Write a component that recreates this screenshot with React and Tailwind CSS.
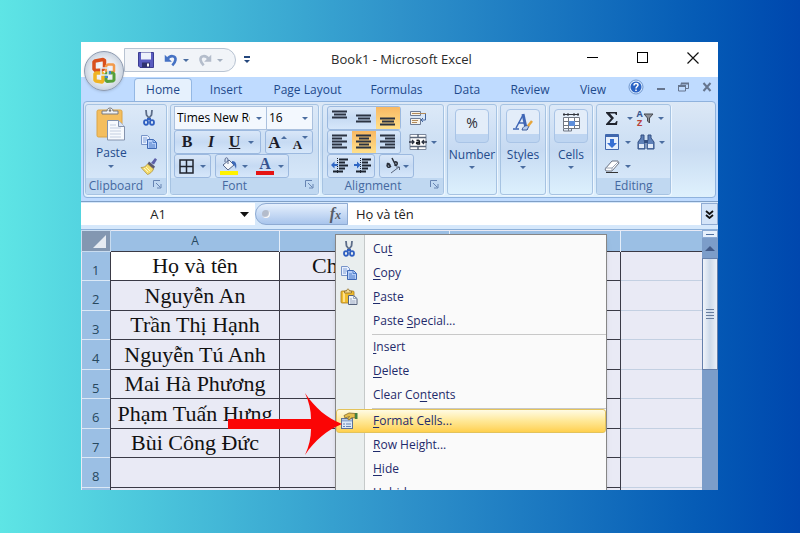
import clsx from 'clsx';

const tabs = [
  { name: 'Home', width: 'w-[58px]' },
  { name: 'Insert', width: 'w-[68px]' },
  { name: 'Page Layout', width: 'w-[95px]' },
  { name: 'Formulas', width: 'w-[83px]' },
  { name: 'Data', width: 'w-[58px]' },
  { name: 'Review', width: 'w-[68px]' },
  { name: 'View', width: 'w-[58px]' },
];

const names = ['Họ và tên', 'Nguyễn An', 'Trần Thị Hạnh', 'Nguyễn Tú Anh', 'Mai Hà Phương', 'Phạm Tuấn Hưng', 'Bùi Công Đức', '', ''];

const menuItems = [
  { before: 'Cu', key: 't', after: '', icon: 'cut' },
  { before: '', key: 'C', after: 'opy', icon: 'copy' },
  { before: '', key: 'P', after: 'aste', icon: 'paste' },
  { before: 'Paste ', key: 'S', after: 'pecial...' },
  { before: '', key: 'I', after: 'nsert', line: true },
  { before: '', key: 'D', after: 'elete' },
  { before: 'Clear Co', key: 'n', after: 'tents' },
  { before: '', key: 'F', after: 'ormat Cells...', icon: 'format', line: true, active: true },
  { before: '', key: 'R', after: 'ow Height...' },
  { before: '', key: 'H', after: 'ide' },
  { before: '', key: 'U', after: 'nhide' },
];

function Svg({ size = 18, children, className, box = '0 0 18 18' }) {
  return (
    <svg width={size} height={size} viewBox={box} fill="none" className={clsx('shrink-0', className)} aria-hidden="true">
      {children}
    </svg>
  );
}

function Caret({ className = 'text-[#4a6da0]' }) {
  return (
    <svg width="6" height="3" viewBox="0 0 6 3" className={clsx('shrink-0', className)} aria-hidden="true">
      <path d="M0 0h6L3 3z" fill="currentColor" />
    </svg>
  );
}

function CutIcon() {
  return (
    <Svg>
      <path d="M6 1l.5 5 4 5M12 1l-.5 5-4 5" stroke="#5c6c88" strokeWidth="1.800" />
      <ellipse cx="6" cy="13.500" rx="2" ry="2.300" stroke="#2f5fc0" strokeWidth="1.800" />
      <ellipse cx="12" cy="13.500" rx="2" ry="2.300" stroke="#2f5fc0" strokeWidth="1.800" />
      <path d="M7 9h4v2H7z" fill="#2f5fc0" />
    </Svg>
  );
}

function CopyIcon() {
  return (
    <Svg>
      <path d="M1.500 2.500h6l2 2v7h-8z" fill="#e8f0fd" stroke="#7794c8" />
      <path d="M3 5h4M3 7h4M3 9h3" stroke="#7fa0da" />
      <path d="M7.500 6.500h6l3 3v6h-9z" fill="#b5cef8" stroke="#3e68b4" />
      <path d="M13 6.500v3h3.500M9 10h3M9 12h6M9 14h6" stroke="#4f7fcb" />
    </Svg>
  );
}

function PasteIcon() {
  return (
    <Svg>
      <rect x="1" y="3" width="13" height="12" rx="1" fill="#f0bd2e" stroke="#a87a1c" strokeWidth=".8" />
      <path d="M3 4h2v10H3z" fill="#ffe08a" />
      <path d="M4.500 5V3h2c0-2.500 3-2.500 3 0h2v2z" fill="#f3d990" stroke="#8d6b23" strokeWidth=".8" />
      <path d="M8.500 7.500h5l3.500 3v6h-8.500z" fill="#eef2f8" stroke="#56637d" />
      <path d="M13.500 7.500v3H17M10 11h2M10 13h5.500M10 15h5.500" stroke="#8495b2" strokeWidth=".8" />
    </Svg>
  );
}

function BigPasteIcon() {
  return (
    <svg width="30" height="34" viewBox="0 0 30 34" fill="none" aria-hidden="true">
      <rect x="1" y="3" width="25" height="27" rx="1.500" fill="#f4be5e" stroke="#dba446" />
      <path d="M6 7V4h5c0-4 6-4 6 0h5v3z" fill="#eef0f2" stroke="#787b80" />
      <circle cx="14" cy="3.500" r="1.200" fill="#777" />
      <path d="M11.500 13.500h11l6 6V33h-17z" fill="#f7fafe" stroke="#8493ad" />
      <path d="M22.500 13.500v6h6" fill="#dbe5f4" stroke="#8493ad" />
      <path d="M14 18h6M14 21h11M14 24h11M14 27h11M14 30h11" stroke="#c3cee0" />
    </svg>
  );
}

function BrushIcon() {
  return (
    <Svg>
      <path d="M11 6l4-5 2 1.500-3 5z" fill="#5b5fa8" />
      <path d="M9 4.500l6 5-1.500 2.500-6-5z" fill="#5d5a70" />
      <path d="M7.500 7l6 5c-1 3-4 5-6 5.500L1 10.500c3 0 5-1 6.500-3.500z" fill="#f4dc6c" stroke="#a88a35" strokeWidth=".7" />
      <path d="M4 11l4 4M6 10l4 4" stroke="#fff6bf" />
    </Svg>
  );
}

function FormatIcon() {
  return (
    <Svg>
      <rect x="1.500" y="6.500" width="11" height="10" fill="#dfe9f8" stroke="#5c7299" />
      <path d="M2 8.500h10" stroke="#93add8" strokeWidth="2" />
      <path d="M3 12h2M6 12h5M3 14.500h2M6 14.500h5" stroke="#6583b5" />
      <path d="M4 3.500l5-2.500 6 .5v4.500l-3-.500-3 2.500-1.500-1 2-2.500L5 6z" fill="#e6bf4d" stroke="#82682d" strokeWidth=".8" />
      <path d="M15 1h2.500v6H15z" fill="#43803f" />
    </Svg>
  );
}

const menuIcons = { cut: <CutIcon />, copy: <CopyIcon />, paste: <PasteIcon />, format: <FormatIcon /> };

function OfficeLogo() {
  return (
    <svg width="28" height="28" viewBox="0 0 28 28" fill="none" aria-hidden="true">
      <path d="M5 4l8-1.500 1.500 1v8L12 13l-6.500.5L4 12V5z" stroke="#d9501c" strokeWidth="3.500" strokeLinejoin="round" />
      <path d="M18 7.500h5l1 1V14l-1 1h-6l-1-1V9z" stroke="#f39a4a" strokeWidth="2.500" strokeLinejoin="round" />
      <path d="M6 16h5.500l1.500 1v6.500L12 25l-6-1-1-1v-6z" stroke="#f0b323" strokeWidth="3.500" strokeLinejoin="round" />
      <path d="M17 16h6l1 1v6l-1 1-6 .5-1-1V17z" stroke="#57a03a" strokeWidth="3" strokeLinejoin="round" />
      <path d="M15 20h3M20 17v-3" stroke="#3f86cf" strokeWidth="2" />
      <path d="M11 11h7v7h-7z" stroke="#dcebf9" strokeWidth="1.500" />
    </svg>
  );
}

function Lines({ rows }) {
  return (
    <Svg>
      {rows.map(([x, y, w]) => (
        <path key={y} d={`M${x} ${y + 0.5}h${w}`} stroke="#2b3342" strokeWidth="1.800" />
      ))}
    </Svg>
  );
}

function IndentIcon({ flip }) {
  return (
    <Svg>
      <path d="M8 2.500h9M8 5.500h6M8 8.500h9M8 11.500h6M2 14.500h10" stroke="#1d2430" strokeWidth="2" />
      <path d="M6.500 1v16" stroke="#1d2430" strokeDasharray="1 1" />
      <path d={flip ? 'M0 7h3V4.500L6.500 8 3 11.500V9H0z' : 'M6.500 7h-3V4.500L0 8l3.500 3.500V9h3z'} fill="#2e66c4" />
    </Svg>
  );
}

function Tool({ label, children, className }) {
  return (
    <button type="button" aria-label={label} className={clsx('flex items-center justify-center', className)}>
      {children}
    </button>
  );
}

function ToolBox({ children, className }) {
  return (
    <div className={clsx('flex h-6 items-stretch rounded-[3px] border border-[#9cb9df] bg-linear-to-b from-[#d9e7f8] via-[#c6daf3] to-[#d6e7fa]', className)}>
      {children}
    </div>
  );
}

function Group({ title, launcher, className, children }) {
  return (
    <section className={clsx('flex flex-col overflow-hidden rounded-[3px] border border-[#a6c3e2] bg-linear-to-b from-[#dce9f8] via-[#cbdef3] to-[#dbebfb] shadow-[1px_1px_0_#edf6ff]', className)}>
      <div className="grow">{children}</div>
      <footer className="relative flex h-4 items-center justify-center bg-[#c0d8f1] text-[12px] text-[#4468a0]">
        <span className={launcher ? 'pr-5' : ''}>{title}</span>
        {launcher && (
          <button type="button" aria-label={`${title} settings`} className="absolute top-0.5 right-1">
            <Svg size={9} box="0 0 9 9">
              <path d="M.5 7V.5H7M3 3l4.500 4.500M8 4v4H4" stroke="#6684b2" />
            </Svg>
          </button>
        )}
      </footer>
    </section>
  );
}

function SmallGroup({ title, className, children }) {
  return (
    <button type="button" className={clsx('flex flex-col items-center rounded-[3px] border border-[#a6c3e2] bg-linear-to-b from-[#dce9f8] via-[#c6daf2] to-[#dcf0fd] pt-1 text-[12px] text-[#244b8c] shadow-[1px_1px_0_#edf6ff]', className)}>
      <span className="flex h-[34px] w-[34px] justify-center rounded border border-[#a9c4e6] bg-linear-to-b from-[#e3edf9] from-75% to-[#bed5f1] to-75% pt-0.5">
        {children}
      </span>
      <span className="mt-[3px] h-[18px] leading-[18px]">{title}</span>
      <Caret className="mt-0.5 text-[#4a6da0]" />
    </button>
  );
}

function TitleBar() {
  return (
    <header className="relative flex h-[35px] bg-white">
      <div className="mt-[6px] ml-[43px] flex h-6 w-[112px] items-center gap-1 rounded-r-full border border-[#b8c3d2] bg-[#f1f4f8] pl-3">
        <button type="button" aria-label="Save">
          <Svg>
            <path d="M1.500 1.500h15v15H3l-1.500-1.500z" fill="#5a5cc0" stroke="#3c3d92" />
            <path d="M4 1.500h10v7H4z" fill="#eef1fb" />
            <path d="M5 11.500h8v5H5z" fill="#30336f" />
            <path d="M10 12.500h2v3h-2z" fill="#fff" />
          </Svg>
        </button>
        <button type="button" aria-label="Undo" className="ml-1 flex items-center gap-1">
          <Svg size={16}>
            <path d="M5 8c3-5 10-4 9 1-.300 2-1.500 4-3.500 6" stroke="#4672c4" strokeWidth="3" />
            <path d="M2 3v8h8z" fill="#4672c4" />
          </Svg>
          <Caret />
        </button>
        <button type="button" aria-label="Redo" className="ml-1 flex items-center gap-1">
          <Svg size={16}>
            <path d="M13 8C10 3 3 4 4 9c.300 2 1.500 4 3.500 6" stroke="#b4bdcb" strokeWidth="3" />
            <path d="M16 3v8H8z" fill="#b4bdcb" />
          </Svg>
          <Caret className="text-[#a4afbf]" />
        </button>
      </div>
      <button type="button" aria-label="Customize toolbar" className="ml-2 flex flex-col items-center justify-center gap-0.5 text-[#24477d]">
        <span className="h-0.5 w-[6px] bg-current" />
        <Caret className="text-[#24477d]" />
      </button>
      <h1 className="absolute inset-0 flex items-center justify-center pl-1 text-[13px] text-[#2b2b2b]">Book1 - Microsoft Excel</h1>
      <div className="relative ml-auto flex items-center gap-[39px] pr-[19px] pb-1">
        <button type="button" aria-label="Minimize" className="h-px w-[11px] bg-black" />
        <button type="button" aria-label="Maximize" className="size-[11px] border border-black" />
        <button type="button" aria-label="Close">
          <Svg size={12} box="0 0 12 12">
            <path d="M.500.500l11 11M11.500.500l-11 11" stroke="#111" strokeWidth="1.200" />
          </Svg>
        </button>
      </div>
      <button type="button" aria-label="Office menu" className="absolute top-[9px] left-[3px] z-10 flex size-10 items-center justify-center rounded-full border border-[#8e9bb0] bg-radial from-white via-[#e3e8ef] to-[#aab8cb] shadow">
        <OfficeLogo />
      </button>
    </header>
  );
}

function TabBar() {
  return (
    <nav className="flex h-6 items-end bg-[#bfdbff] pl-[53px] text-[12px] text-[#1e4a8c]">
      {tabs.map((tab, i) => (
        <button key={tab.name} type="button" className={clsx('h-[23px] shrink-0 text-center', tab.width, i === 0 && 'rounded-t border border-b-0 border-[#94b8e4] bg-[#e6f1fd]')}>
          {tab.name}
        </button>
      ))}
      <div className="ml-auto flex h-full items-center gap-[13px] pr-1.5 pb-1">
        <button type="button" aria-label="Help">
          <Svg size={16} box="0 0 16 16">
            <circle cx="8" cy="8" r="7" fill="#dcecff" stroke="#6e96cf" />
            <circle cx="8" cy="8" r="5.500" fill="#2b63c4" />
            <path d="M6 6.500c0-3 4-2.500 4-.5C10 7.500 8 7.500 8 9.500M8 10.500v1.500" stroke="#fff" strokeWidth="1.500" />
          </Svg>
        </button>
        <button type="button" aria-label="Minimize book" className="mt-1 h-0.5 w-2 bg-[#66758e]" />
        <button type="button" aria-label="Restore book">
          <Svg size={11} box="0 0 11 11">
            <path d="M3 3V1.500h7.500v5H8M.5 4h7v5h-7z" stroke="#66758e" />
            <path d="M0 4h8M3 1.500h8" stroke="#66758e" strokeWidth="2" />
          </Svg>
        </button>
        <button type="button" aria-label="Close book">
          <Svg size={10} box="0 0 10 10">
            <path d="M1.500 1l7 8M8.500 1l-7 8" stroke="#66758e" strokeWidth="2" />
          </Svg>
        </button>
      </div>
    </nav>
  );
}

function FontSelect({ label, value, className }) {
  return (
    <div className={clsx('relative flex items-center border border-[#abc1de] bg-[#f3f8fe]', className)}>
      <select aria-label={label} className="h-full w-full appearance-none overflow-hidden pr-4 pl-0.5 text-[12px] text-clip text-black">
        <option>{value}</option>
      </select>
      <Caret className="pointer-events-none absolute right-1 text-[#4a6da0]" />
    </div>
  );
}

function Ribbon() {
  return (
    <div className="border-b border-[#7f9fc6] bg-[#bfdbff] px-0.5 pb-[3px]">
      <div className="flex h-[97px] items-stretch gap-[3px] rounded border border-[#8fb2dd] bg-linear-to-b from-[#dce8f6] via-[#c9dcf2] to-[#dff1fd] px-px py-0.5">
        <Group title="Clipboard" launcher className="w-[82px]">
          <div className="flex h-full justify-between pt-0.5 pr-2 pl-2.5">
            <button type="button" className="flex flex-col items-center text-[12px] text-[#244b8c]">
              <BigPasteIcon />
              <span className="mt-1 h-4 leading-4">Paste</span>
              <Caret className="mt-1 text-[#4a6da0]" />
            </button>
            <div className="flex flex-col gap-1.5 pt-0.5">
              <button type="button" aria-label="Cut"><CutIcon /></button>
              <button type="button" aria-label="Copy"><CopyIcon /></button>
              <button type="button" aria-label="Format painter"><BrushIcon /></button>
            </div>
          </div>
        </Group>

        <Group title="Font" launcher className="w-[149px]">
          <div className="flex flex-col px-[3px] pt-px">
            <div className="flex h-6">
              <FontSelect label="Font" value="Times New Roman" className="w-[93px]" />
              <FontSelect label="Font size" value="16" className="w-[46px] border-l-0" />
            </div>
            <div className="flex gap-1 font-['Liberation_Serif'] text-[16px] leading-none font-bold text-[#1c1c28]">
              <ToolBox className="w-[87px]">
                <Tool label="Bold" className="w-6">B</Tool>
                <Tool label="Italic" className="w-6 italic">I</Tool>
                <Tool label="Underline" className="grow gap-2"><span className="underline">U</span><Caret /></Tool>
              </ToolBox>
              <ToolBox className="w-[48px]">
                <Tool label="Grow font" className="w-6 items-end pb-0.5 text-[17px]">A<Caret className="mb-3 rotate-180 text-[#4a6da0]" /></Tool>
                <Tool label="Shrink font" className="w-6 items-end pb-0.5 text-[13px]">A<Caret className="mb-3 text-[#4a6da0]" /></Tool>
              </ToolBox>
            </div>
            <div className="flex gap-1">
              <ToolBox className="w-[37px]">
                <Tool label="Borders" className="grow gap-1.5">
                  <Svg size={15} box="0 0 15 15"><path d="M1 1h13v13H1zM7.500 1v13M1 7.500h13" stroke="#20242e" strokeWidth="1.500" /></Svg>
                  <Caret />
                </Tool>
              </ToolBox>
              <ToolBox className="w-[74px]">
                <Tool label="Fill color" className="w-9 gap-1">
                  <Svg>
                    <path d="M3 8l6-5 5 5-6 5z" fill="#f4f7fb" stroke="#56678b" />
                    <path d="M8 7V3c0-3-3-3-3 0v2" stroke="#56678b" />
                    <path d="M12 4c4 0 5 3 4 8-1-3-2-5-4-5z" fill="#3d69b8" />
                    <path d="M0 14h18v4H0z" fill="#fff200" />
                  </Svg>
                  <Caret />
                </Tool>
                <Tool label="Font color" className="w-9 gap-1 font-['Liberation_Serif'] font-bold text-[#36538f]">
                  <span className="flex h-[18px] w-[18px] items-start justify-center border-b-4 border-[#e51414] text-[16px] leading-[14px]">A</span>
                  <Caret />
                </Tool>
              </ToolBox>
            </div>
          </div>
        </Group>

        <Group title="Alignment" launcher className="w-[122px]">
          <div className="flex flex-col px-1 pt-px">
            <div className="flex gap-2">
              <ToolBox className="w-[74px]">
                <Tool label="Top align" className="flex-1"><Lines rows={[[1, 2, 15], [3, 5, 12], [1, 8, 15]]} /></Tool>
                <Tool label="Middle align" className="flex-1"><Lines rows={[[1, 6, 15], [3, 9, 12], [1, 12, 15]]} /></Tool>
                <Tool label="Bottom align" className="flex-1 bg-linear-to-b from-[#f8b863] to-[#ffe08a]"><Lines rows={[[1, 9, 15], [3, 12, 12], [1, 15, 15]]} /></Tool>
              </ToolBox>
              <Tool label="Wrap text" className="h-6">
                <Svg>
                  <path d="M1.500 2.500h10v4h-10zM1.500 9.500h10v6h-10z" fill="#f7f2e8" stroke="#6d7c96" />
                  <path d="M3 4.500h14M3 11.500h6M3 13.500h5" stroke="#b18a59" />
                  <path d="M16.500 5v6h-4M14 9l-2 2 2 2" stroke="#43659d" />
                </Svg>
              </Tool>
            </div>
            <div className="flex gap-2">
              <ToolBox className="w-[74px]">
                <Tool label="Align left" className="flex-1"><Lines rows={[[1, 2, 15], [1, 5, 10], [1, 8, 15], [1, 11, 10], [1, 14, 15]]} /></Tool>
                <Tool label="Center" className="flex-1 bg-linear-to-b from-[#f8b863] to-[#ffe08a]"><Lines rows={[[1, 2, 15], [4, 5, 10], [1, 8, 15], [4, 11, 10], [1, 14, 15]]} /></Tool>
                <Tool label="Align right" className="flex-1"><Lines rows={[[1, 2, 15], [6, 5, 10], [1, 8, 15], [6, 11, 10], [1, 14, 15]]} /></Tool>
              </ToolBox>
              <Tool label="Merge and center" className="h-6 gap-1">
                <Svg>
                  <path d="M1 1.500h16v15H1z" fill="#fff" stroke="#7b879c" />
                  <path d="M1 4.500h16M1 13.500h16M9 1v3.500M9 13.500V17" stroke="#5a6679" strokeWidth="1.500" />
                  <path d="M0 9h5M18 9h-5M3 7l2 2-2 2M15 7l-2 2 2 2" stroke="#2a3140" strokeWidth="1.300" />
                  <path d="M7.500 7.500c3-1 3 0 3 3.500-4 .5-4-2 0-2" stroke="#16191f" strokeWidth="1.400" />
                </Svg>
                <Caret />
              </Tool>
            </div>
            <div className="flex gap-1">
              <ToolBox className="w-[48px]">
                <Tool label="Decrease indent" className="flex-1"><IndentIcon /></Tool>
                <Tool label="Increase indent" className="flex-1"><IndentIcon flip /></Tool>
              </ToolBox>
              <ToolBox className="w-[35px]">
                <Tool label="Orientation" className="grow gap-px text-[#2a2f3a]">
                  <Svg>
                    <path d="M3 6l4 4M3 9c0-3 2-3 3-1 1 3-4 3-2.500 0M8 1l4 8M10 6c1-2 4-1 3 1.500-1 1.500-2 1-2.500 0" stroke="currentColor" strokeWidth="1.500" />
                    <path d="M7 16l8-6M12 10h3.500v3" stroke="#59657b" />
                  </Svg>
                  <Caret />
                </Tool>
              </ToolBox>
            </div>
          </div>
        </Group>

        <SmallGroup title="Number" className="w-[50px]">
          <span className="text-[14px] text-[#2b2b33]">%</span>
        </SmallGroup>
        <SmallGroup title="Styles" className="w-[46px]">
          <Svg size={20} box="0 0 20 20">
            <path d="M0 17h6M9 17h6M3 16L10 3M5 11h6" stroke="#3f66b5" strokeWidth="1.500" />
            <path d="M10 2l3 14" stroke="#3f66b5" strokeWidth="3" />
            <path d="M9 18c1-4 4-5 7-4l-2 4z" fill="#b7cdf0" stroke="#3f5e9c" />
            <path d="M15 14l4-5" stroke="#e6a53b" strokeWidth="2.500" />
          </Svg>
        </SmallGroup>
        <SmallGroup title="Cells" className="w-[44px]">
          <Svg size={20} box="0 0 20 20">
            <path d="M2.500 5.500h16v11h-16z" fill="#fff" stroke="#707783" />
            <path d="M7.500 5v14M13.500 5v12M2 9.500h17M2 13.500h17M2.500 17v2h8v-2" stroke="#707783" />
            <path d="M8 9h6v5H8z" fill="#5e8fdb" />
            <path d="M2 2.500h16M3 1v3M7 1v3M13 1v3M17 1v3" stroke="#30343c" />
          </Svg>
        </SmallGroup>

        <Group title="Editing" className="w-[75px]">
          <div className="grid grid-cols-2 gap-y-1 pt-[3px] pl-1.5">
            <Tool label="Sum" className="h-5 gap-1.5 justify-self-start">
              <Svg>
                <path d="M3 3h11v3h-1l-1-1.500H7l4 4.500-4.500 5H12l1.500-2h1l-.5 4H3v-1l5-5.500L3 4z" fill="#20242e" />
              </Svg>
              <Caret />
            </Tool>
            <Tool label="Sort and filter" className="h-5 gap-1 justify-self-start">
              <span className="flex items-center">
                <span className="flex flex-col text-[9px] leading-[9px] font-bold text-[#36538f]">
                  <span>A</span>
                  <span className="text-[#b8433a]">Z</span>
                </span>
                <Svg size={11} box="0 0 11 11"><path d="M1 1h9L6.500 5v5L4.500 8V5z" fill="#8d9097" stroke="#45484f" /></Svg>
              </span>
              <Caret />
            </Tool>
            <Tool label="Fill" className="h-5 gap-1 justify-self-start">
              <Svg>
                <path d="M2.500 1.500h13v15h-13z" fill="#e6effc" stroke="#3f67ae" />
                <path d="M2 2h14v2H2z" fill="#3f67ae" />
                <path d="M7 6h4v4h3l-5 5-5-5h3z" fill="#3770d4" />
              </Svg>
              <Caret />
            </Tool>
            <Tool label="Find" className="h-5 gap-1 justify-self-start">
              <Svg>
                <path d="M4 2h3v5l1 2v7H1V9l3-4zM11 2h3v3l3 4v7h-7V9l1-2z" fill="#5f81b8" stroke="#334f82" />
                <path d="M2 11h5v4H2zM11 11h5v4h-5z" fill="#dfe9f8" />
                <path d="M7 7h4v3H7z" fill="#334f82" />
              </Svg>
              <Caret />
            </Tool>
            <Tool label="Clear" className="h-5 gap-1 justify-self-start">
              <Svg>
                <path d="M2 12l7-8h6l1 2-7 8H3z" fill="#fff" stroke="#6b7383" />
                <path d="M9 14v-3l7-7M2 11h7" stroke="#9aa3b3" />
                <path d="M3 15.500h12" stroke="#333" />
              </Svg>
              <Caret />
            </Tool>
          </div>
        </Group>
      </div>
    </div>
  );
}

function FormulaBar() {
  return (
    <div className="flex h-7 items-start border-b border-[#8eb1da] bg-[#d6e8fb] pt-px text-[13px] text-[#222]">
      <div className="relative h-[22px] w-[174px] bg-white">
        <input aria-label="Name box" defaultValue="A1" className="h-full w-[154px] bg-transparent text-center" />
        <svg width="9" height="5" viewBox="0 0 9 5" className="absolute top-[9px] right-[6px]" aria-hidden="true">
          <path d="M0 0h9L4.500 5z" fill="#111" />
        </svg>
      </div>
      <div className="flex h-[22px] w-[93px] items-center justify-between rounded-l-full border border-[#8fabd3] bg-linear-to-b from-[#e6f0fd] to-[#a9c5ec] pr-1.5 pl-1.5">
        <span className="size-2 rounded-full bg-[#b4bccb] shadow-[inset_-1px_-1px_1px_#fff]" />
        <button type="button" className="font-['Liberation_Serif'] text-[16px] leading-none font-bold text-[#565c68] italic">
          f<span className="text-[12px]">x</span>
        </button>
      </div>
      <input aria-label="Formula" defaultValue="Họ và tên" className="h-[22px] min-w-0 grow bg-white px-2" />
      <button type="button" aria-label="Expand formula bar" className="flex h-[22px] w-[17px] items-center justify-center border border-[#8fabd3] bg-[#d4e4f8]">
        <Svg size={9} box="0 0 9 9">
          <path d="M1 1l3.500 3L8 1M1 5l3.500 3L8 5" stroke="#111" strokeWidth="1.800" />
        </Svg>
      </button>
    </div>
  );
}

function Sheet() {
  return (
    <table className="w-full table-fixed border-collapse bg-[#e9eaf5]">
      <colgroup>
        <col className="w-[29px]" />
        <col className="w-[169px]" />
        <col className="w-[170px]" />
        <col className="w-[171px]" />
        <col />
      </colgroup>
      <thead>
        <tr className="h-[21px] bg-[#9bbfe4] text-[12px] text-[#27485f]">
          <th aria-label="Select all" className="border border-[#c9dcf0] bg-[#8397b1] p-0">
            <svg width="13" height="13" viewBox="0 0 13 13" className="mr-1 ml-auto" aria-hidden="true">
              <path d="M13 0v13H0z" fill="#e6ebf2" />
            </svg>
          </th>
          <th className="border-x border-[#e4eefa] p-0 font-normal">A</th>
          <th className="border-x border-[#e4eefa] p-0" />
          <th className="border-x border-[#e4eefa] p-0" />
          <th className="p-0" />
        </tr>
      </thead>
      <tbody className="font-['Liberation_Serif'] text-[22px] leading-[24px] text-[#111]">
        {names.map((name, i) => (
          <tr key={i} className="h-[29px] even:h-[30px]">
            <th className="border-t border-[#dbe8f6] bg-[#9bbfe4] p-0 pt-2 font-['Open_Sans'] text-[13px] leading-none font-normal text-[#27485f]">{i < 8 && i + 1}</th>
            <td className={clsx('border border-[#3a3a46] p-0 text-center whitespace-nowrap', i === 0 && 'bg-white')}>{name}</td>
            <td className="border border-[#3a3a46] p-0 pl-8">{i === 0 && 'Ch'}</td>
            <td className="border border-[#3a3a46] p-0" />
            <td className={clsx('border-t p-0', i === 0 ? 'border-[#3a3a46]' : 'border-[#c3d0e2]')} />
          </tr>
        ))}
      </tbody>
    </table>
  );
}

function ScrollBar() {
  return (
    <div className="flex w-4 shrink-0 flex-col bg-[#7c9dc9]">
      <div className="flex h-2 items-center justify-center border border-[#8aa9d3] bg-[#e6f0fc]">
        <span className="h-px w-2 bg-[#50709f]" />
      </div>
      <button type="button" aria-label="Scroll up" className="flex h-5 items-center justify-center">
        <svg width="10" height="5" viewBox="0 0 10 5" aria-hidden="true"><path d="M0 5h10L5 0z" fill="#425a87" /></svg>
      </button>
      <div className="flex h-[112px] flex-col items-center justify-center gap-0.5 border border-[#6580ab] bg-linear-to-r from-[#f0f4fa] via-[#cddaea] to-[#eaf0f8]">
        <span className="h-px w-2 bg-[#687d9e]" />
        <span className="h-px w-2 bg-[#687d9e]" />
        <span className="h-px w-2 bg-[#687d9e]" />
        <span className="h-px w-2 bg-[#687d9e]" />
      </div>
    </div>
  );
}

function ContextMenu() {
  return (
    <ul className="absolute top-1 left-[254px] w-[272px] border border-[#868686] bg-[linear-gradient(to_right,#e9eeee_28px,#c5c9c9_28px,#c5c9c9_29px,#fafafa_29px)] py-0.5 text-[12px] text-[#1f2a6b] shadow-md">
      {menuItems.map((item) => (
        <li key={item.key + item.after} className={clsx(item.line && 'pt-px')}>
          {item.line && <hr className="ml-9 border-[#c8c8c8]" />}
          <button
            type="button"
            className={clsx(
              'flex h-6 w-full items-center rounded-[3px] border pl-[3px] text-left',
              item.active ? 'border-[#e3c35b] bg-linear-to-b from-[#fffbe3] via-[#ffe896] via-50% to-[#ffd04c]' : 'border-transparent',
            )}
          >
            <span className="w-[33px]">{item.icon && menuIcons[item.icon]}</span>
            <span>
              {item.before}
              <u className="underline-offset-2">{item.key}</u>
              {item.after}
            </span>
          </button>
        </li>
      ))}
    </ul>
  );
}

export default function App() {
  return (
    <div className="min-h-screen bg-linear-to-r from-[#5ee5e5] via-[#2f92ca] to-[#0047ae] pt-[42px] pr-[82px] pb-[42px] pl-[81px] font-['Open_Sans',sans-serif]">
      <main className="overflow-hidden bg-[#bfdbff]">
        <TitleBar />
        <TabBar />
        <Ribbon />
        <FormulaBar />
        <div className="relative flex max-h-[260px] overflow-hidden">
          <div className="min-w-0 grow">
            <Sheet />
          </div>
          <ScrollBar />
          <ContextMenu />
          <svg width="116" height="62" viewBox="0 0 116 62" className="absolute top-[163px] left-[146px]" aria-hidden="true">
            <path d="M1 26h83c0-9-2-17-6-26 10 15 22 25 37 31-15 6-27 16-37 31 4-9 6-17 6-26H1z" fill="#fb0505" />
          </svg>
        </div>
      </main>
    </div>
  );
}
